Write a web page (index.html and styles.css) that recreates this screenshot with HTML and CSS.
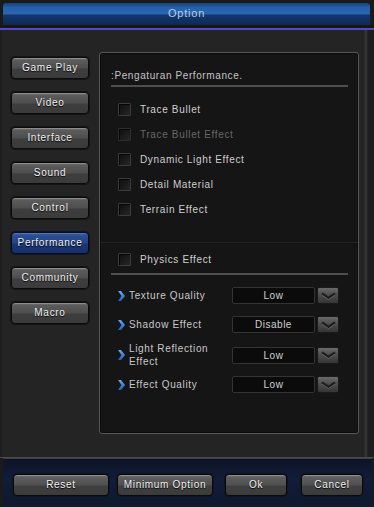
FILE: index.html
```html
<!DOCTYPE html>
<html>
<head>
<meta charset="utf-8">
<link rel="stylesheet" href="styles.css">
</head>
<body>
<div class="window">
  <div class="titlebar">Option</div>
  <div class="titlesep"></div>
  <div class="main">
    <nav class="sidebar">
      <div class="tab">Game Play</div>
      <div class="tab">Video</div>
      <div class="tab">Interface</div>
      <div class="tab">Sound</div>
      <div class="tab">Control</div>
      <div class="tab active">Performance</div>
      <div class="tab">Community</div>
      <div class="tab">Macro</div>
    </nav>
    <section class="panel">
      <div class="heading">:Pengaturan Performance.</div>
      <div class="checks">
        <div class="check"><span class="box"></span><span class="label">Trace Bullet</span></div>
        <div class="check disabled"><span class="box"></span><span class="label">Trace Bullet Effect</span></div>
        <div class="check"><span class="box"></span><span class="label">Dynamic Light Effect</span></div>
        <div class="check"><span class="box"></span><span class="label">Detail Material</span></div>
        <div class="check"><span class="box"></span><span class="label">Terrain Effect</span></div>
      </div>
      <div class="faintline"></div>
      <div class="check physics"><span class="box"></span><span class="label">Physics Effect</span></div>
      <div class="rule"></div>
      <div class="selects">
        <div class="srow r1">
          <svg class="bullet" width="7" height="10" viewBox="0 0 7 10"><defs><linearGradient id="bg1" x1="0" y1="0" x2="0" y2="1"><stop offset="0" stop-color="#6aa8f0"/><stop offset="1" stop-color="#1f5fc0"/></linearGradient></defs><polygon points="0,0 3,0 7,5 3,10 0,10 3.5,5" fill="url(#bg1)"/></svg>
          <span class="slabel">Texture Quality</span>
          <div class="dd"><span class="val">Low</span></div>
          <span class="ddbtn"><svg width="15" height="8" viewBox="0 0 15 8"><polyline points="1,1.5 7.5,6 14,1.5" fill="none" stroke="#1c1c1c" stroke-width="2.2"/><polyline points="1,3 7.5,7.5 14,3" fill="none" stroke="#8a8a8a" stroke-width="0.8" opacity="0.6"/></svg></span>
        </div>
        <div class="srow r2">
          <svg class="bullet" width="7" height="10" viewBox="0 0 7 10"><polygon points="0,0 3,0 7,5 3,10 0,10 3.5,5" fill="url(#bg1)"/></svg>
          <span class="slabel">Shadow Effect</span>
          <div class="dd"><span class="val">Disable</span></div>
          <span class="ddbtn"><svg width="15" height="8" viewBox="0 0 15 8"><polyline points="1,1.5 7.5,6 14,1.5" fill="none" stroke="#1c1c1c" stroke-width="2.2"/><polyline points="1,3 7.5,7.5 14,3" fill="none" stroke="#8a8a8a" stroke-width="0.8" opacity="0.6"/></svg></span>
        </div>
        <div class="srow r3">
          <svg class="bullet" width="7" height="10" viewBox="0 0 7 10"><polygon points="0,0 3,0 7,5 3,10 0,10 3.5,5" fill="url(#bg1)"/></svg>
          <span class="slabel">Light Reflection<br>Effect</span>
          <div class="dd"><span class="val">Low</span></div>
          <span class="ddbtn"><svg width="15" height="8" viewBox="0 0 15 8"><polyline points="1,1.5 7.5,6 14,1.5" fill="none" stroke="#1c1c1c" stroke-width="2.2"/><polyline points="1,3 7.5,7.5 14,3" fill="none" stroke="#8a8a8a" stroke-width="0.8" opacity="0.6"/></svg></span>
        </div>
        <div class="srow r4">
          <svg class="bullet" width="7" height="10" viewBox="0 0 7 10"><polygon points="0,0 3,0 7,5 3,10 0,10 3.5,5" fill="url(#bg1)"/></svg>
          <span class="slabel">Effect Quality</span>
          <div class="dd"><span class="val">Low</span></div>
          <span class="ddbtn"><svg width="15" height="8" viewBox="0 0 15 8"><polyline points="1,1.5 7.5,6 14,1.5" fill="none" stroke="#1c1c1c" stroke-width="2.2"/><polyline points="1,3 7.5,7.5 14,3" fill="none" stroke="#8a8a8a" stroke-width="0.8" opacity="0.6"/></svg></span>
        </div>
      </div>
    </section>
  </div>
  <div class="footer">
    <div class="btn b-reset">Reset</div>
    <div class="btn b-min">Minimum Option</div>
    <div class="btn b-ok">Ok</div>
    <div class="btn b-cancel">Cancel</div>
  </div>
</div>
</body>
</html>
```
FILE: styles.css
```css
* { box-sizing: border-box; }
html, body { margin: 0; padding: 0; background: #151515; }
body {
  width: 374px; height: 507px; overflow: hidden;
  font-family: "Liberation Sans", Arial, sans-serif;
  font-size: 10px;
  letter-spacing: 0.5px;
}
.window {
  width: 374px; height: 507px;
  background: #1a1a1a;
  display: flex; flex-direction: column;
  padding-top: 3px;
}
.titlebar {
  height: 22px;
  margin: 0 4px 0 3px;
  border-radius: 3px 3px 0 0;
  background: linear-gradient(#173f78 0, #2461aa 20%, #2a67b0 50%, #13386e 54%, #0f2956 100%);
  color: #bccbe4;
  font-size: 11px;
  text-align: center;
  line-height: 20px;
  letter-spacing: 0.8px;
}
.titlesep {
  height: 5px;
  background: #161616;
  border-bottom: 2px solid #5449c2;
  margin-top: 0;
}
.main {
  height: 428px;
  background: linear-gradient(90deg, #1c1c1c 0, #242424 3px, #242424 364px, #3a3a3a 366px, #1e1e1e 368px, #1e1e1e 100%);
  display: flex;
  align-items: flex-start;
  border-bottom: 1px solid #4a4a4a;
}
.sidebar {
  margin-left: 11px;
  margin-top: 27px;
  width: 78px;
  display: flex; flex-direction: column;
  gap: 13px;
}
.tab {
  height: 22px;
  border-radius: 4px;
  border: 1px solid #0c0c0c;
  background: linear-gradient(#7a7a7a 0, #5b5b5b 12%, #4e4e4e 50%, #3e3e3e 55%, #3b3b3b 100%);
  box-shadow: inset 0 1px 0 rgba(255,255,255,0.18), 0 0 0 1px #141414;
  color: #f2f2f2;
  text-align: center;
  line-height: 19px;
  letter-spacing: 0.7px;
  text-shadow: 0 1px 1px #000;
}
.tab.active {
  background: linear-gradient(#3b62a8 0, #2a4d93 15%, #244488 50%, #1a3576 55%, #17306c 100%);
  box-shadow: inset 0 1px 0 rgba(140,180,255,0.25), 0 0 0 1px #0d1530;
}
.panel {
  margin-left: 10px;
  margin-top: 22px;
  width: 260px;
  height: 382px;
  border: 1px solid #575757;
  border-radius: 3px;
  background: #151515;
  box-shadow: inset 0 0 0 1px #0c0c0c;
  padding: 0 10px 0 11px;
  display: flex; flex-direction: column;
}
.heading {
  color: #c4c4c4;
  margin-top: 17px;
  height: 17px;
  line-height: 12px;
  border-bottom: 2px solid #4e4e4e;
  letter-spacing: 0.6px;
}
.checks { margin-top: 10px; display: flex; flex-direction: column; }
.check {
  height: 25px;
  display: flex; align-items: center;
  padding-left: 7px;
}
.box {
  width: 13px; height: 13px;
  border: 1px solid #3c3c3c;
  background: linear-gradient(135deg, #0e0e0e 0, #262626 100%);
  box-shadow: inset 1px 1px 0 #060606;
  border-radius: 1px;
}
.label {
  margin-left: 9px;
  color: #cfcfcf;
  letter-spacing: 0.65px;
}
.check.disabled .label { color: #686868; }
.check.disabled .box { border-color: #2e2e2e; }
.faintline {
  height: 1px;
  margin: 20px -10px 0 -11px;
  background: #212121;
}
.check.physics { margin-top: 4px; }
.rule {
  height: 2px;
  margin-top: 1px;
  background: #505050;
}
.selects { display: flex; flex-direction: column; }
.srow {
  display: flex; align-items: center;
  padding-left: 7px;
}
.srow.r1 { margin-top: 12px; height: 17px; }
.srow.r2 { margin-top: 12px; height: 17px; }
.srow.r3 { margin-top: 9px; height: 26px; }
.srow.r4 { margin-top: 8px; height: 17px; }
.bullet { flex: none; }
.slabel {
  margin-left: 4px;
  width: 103px;
  color: #c8c8c8;
  letter-spacing: 0.65px;
  line-height: 13px;
}
.dd {
  width: 83px; height: 17px;
  border: 1px solid #343434;
  border-radius: 2px;
  background: #0b0b0b;
  color: #d0d0d0;
  text-align: center;
  line-height: 15px;
}
.ddbtn {
  margin-left: 2px;
  width: 22px; height: 17px;
  border-radius: 2px;
  border: 1px solid #1a1a1a;
  background: linear-gradient(#6a6a6a 0, #505050 40%, #353535 100%);
  display: flex; align-items: center; justify-content: center;
}
.footer {
  margin: 0 2px 0 3px;
  height: 48px;
  background: linear-gradient(#0d1426 0, #121c38 40%, #0f1830 100%);
  border-top: 1px solid #3a3f4a;
  display: flex; align-items: flex-start;
  padding-top: 15px;
  padding-left: 10px;
}
.btn {
  height: 22px;
  border-radius: 4px;
  border: 1px solid #0a0a0a;
  background: linear-gradient(#7a7a7a 0, #5d5d5d 12%, #505050 50%, #404040 55%, #3b3b3b 100%);
  box-shadow: inset 0 1px 0 rgba(255,255,255,0.18), 0 0 0 1px #10141c;
  color: #f2f2f2;
  text-align: center;
  line-height: 19px;
  letter-spacing: 0.7px;
  text-shadow: 0 1px 1px #000;
}
.b-reset { width: 96px; }
.b-min { width: 96px; margin-left: 8px; }
.b-ok { width: 62px; margin-left: 12px; }
.b-cancel { width: 62px; margin-left: 14px; }
```
